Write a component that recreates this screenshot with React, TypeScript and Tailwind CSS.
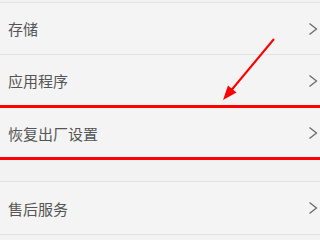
import React from "react";

const Chevron = () => (
  <svg width="10" height="14" viewBox="0 0 10 14" className="shrink-0">
    <polyline points="1.5,1.5 8.5,7 1.5,12.5" fill="none" stroke="#6b6b6b" strokeWidth="1.3" />
  </svg>
);

const Row = ({ label, last }: { label: string; last?: boolean }) => (
  <div className={`flex items-center justify-between h-[52px] pl-[8px] pr-[2px] ${last ? "" : "border-b border-[#e3e3e3]"}`}>
    <span className="text-[15px] text-[#555555] leading-none">{label}</span>
    <Chevron />
  </div>
);

export default function App() {
  return (
    <div
      className="relative w-[320px] h-[240px] overflow-hidden bg-[#f2f2f2]"
      style={{ fontFamily: '"Noto Sans CJK SC", "Noto Sans", sans-serif' }}
    >
      <div className="mt-[2px] border-t border-b border-[#e3e3e3] bg-[#f4f4f4]">
        <Row label="存储" />
        <Row label="应用程序" />
        <Row label="恢复出厂设置" last />
      </div>
      <div className="mt-[21px] border-t border-b border-[#e3e3e3] bg-[#f4f4f4]">
        <Row label="售后服务" last />
      </div>

      <div className="absolute left-0 top-[105px] w-full h-[2.5px] bg-[#ff0000]" />
      <div className="absolute left-0 top-[157px] w-full h-[2.5px] bg-[#ff0000]" />

      <svg className="absolute left-0 top-0" width="320" height="240" viewBox="0 0 320 240">
        <line x1="274" y1="39" x2="229" y2="93" stroke="#ff0000" strokeWidth="2" />
        <polygon points="223,100 236.5,92.5 228,85.5" fill="#ff0000" />
      </svg>
    </div>
  );
}
